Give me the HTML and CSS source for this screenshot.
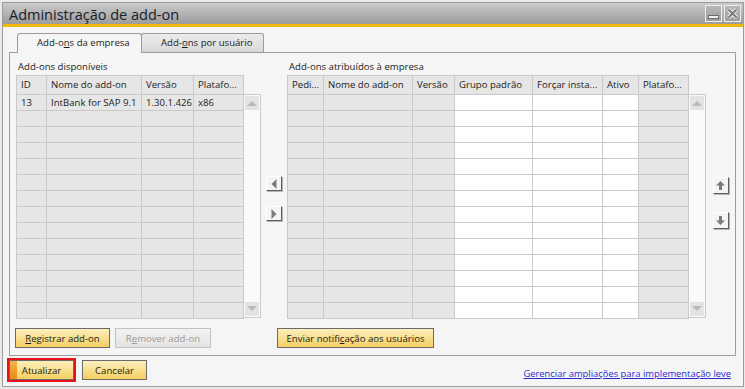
FILE: index.html
```html
<!DOCTYPE html>
<html lang="pt-BR">
<head>
    <meta charset="UTF-8">
    <title>Administração de add-on</title>
    <link rel="stylesheet" href="styles.css">
</head>
<body>
<div class="window">
    <div class="frame">
        <div class="titlebar">
            <span class="title">Administração de add-on</span>
            <div class="title-buttons">
                <span class="tbtn">
                    <svg width="15" height="15" viewBox="0 0 15 15"><rect x="2.5" y="9.5" width="10" height="3" fill="#f2f2f2" stroke="#6e6e6e"/></svg>
                </span>
                <span class="tbtn">
                    <svg width="15" height="15" viewBox="0 0 15 15"><path d="M3.5 3.5 L11.5 11.5 M11.5 3.5 L3.5 11.5" stroke="#f0f0f0" stroke-width="4"/><path d="M3.5 3.5 L11.5 11.5 M11.5 3.5 L3.5 11.5" stroke="#7c7c7c" stroke-width="2"/></svg>
                </span>
            </div>
        </div>

        <div class="content">
            <div class="tabs">
                <div class="tab active">Add-o<u>n</u>s da empresa</div>
                <div class="tab">Add-<u>o</u>ns por usuário</div>
            </div>

            <div class="panel">
                <div class="lists">
                    <div class="section available">
                        <div class="label">Add-ons disponíveis</div>
                        <div class="grid-wrap">
                            <table class="grid">
                                <colgroup>
                                    <col class="c30"><col class="c95"><col class="c52"><col class="c50">
                                </colgroup>
                                <tr class="head"><th>ID</th><th>Nome do add-on</th><th>Versão</th><th>Platafo...</th></tr>
                                <tr><td>13</td><td>IntBank for SAP 9.1</td><td>1.30.1.426</td><td>x86</td></tr>
                                <tr><td></td><td></td><td></td><td></td></tr>
                                <tr><td></td><td></td><td></td><td></td></tr>
                                <tr><td></td><td></td><td></td><td></td></tr>
                                <tr><td></td><td></td><td></td><td></td></tr>
                                <tr><td></td><td></td><td></td><td></td></tr>
                                <tr><td></td><td></td><td></td><td></td></tr>
                                <tr><td></td><td></td><td></td><td></td></tr>
                                <tr><td></td><td></td><td></td><td></td></tr>
                                <tr><td></td><td></td><td></td><td></td></tr>
                                <tr><td></td><td></td><td></td><td></td></tr>
                                <tr><td></td><td></td><td></td><td></td></tr>
                                <tr><td></td><td></td><td></td><td></td></tr>
                                <tr><td></td><td></td><td></td><td></td></tr>
                            </table>
                            <div class="scrollbar">
                                <span class="sb-btn"><svg width="10" height="6" viewBox="0 0 10 6"><path d="M0 6 L5 1 L10 6 Z" fill="#b9b9b9"/></svg></span>
                                <span class="sb-btn"><svg width="10" height="6" viewBox="0 0 10 6"><path d="M0 0 L5 5 L10 0 Z" fill="#b9b9b9"/></svg></span>
                            </div>
                        </div>
                    </div>

                    <div class="movers">
                        <span class="mini"><svg width="6" height="10" viewBox="0 0 6 10"><path d="M5.5 0 L0.5 5 L5.5 10 Z" fill="#7b7b7b"/></svg></span>
                        <span class="mini"><svg width="6" height="10" viewBox="0 0 6 10"><path d="M0.5 0 L5.5 5 L0.5 10 Z" fill="#7b7b7b"/></svg></span>
                    </div>

                    <div class="section assigned">
                        <div class="label">Add-ons atribuídos à empresa</div>
                        <div class="grid-wrap">
                            <table class="grid wide">
                                <colgroup>
                                    <col class="c36"><col class="c89"><col class="c42"><col class="c78"><col class="c70"><col class="c36"><col class="c50">
                                </colgroup>
                                <tr class="head"><th>Pedi...</th><th>Nome do add-on</th><th>Versão</th><th>Grupo padrão</th><th>Forçar insta...</th><th>Ativo</th><th>Platafo...</th></tr>
                                <tr><td></td><td></td><td></td><td></td><td></td><td></td><td></td></tr>
                                <tr><td></td><td></td><td></td><td></td><td></td><td></td><td></td></tr>
                                <tr><td></td><td></td><td></td><td></td><td></td><td></td><td></td></tr>
                                <tr><td></td><td></td><td></td><td></td><td></td><td></td><td></td></tr>
                                <tr><td></td><td></td><td></td><td></td><td></td><td></td><td></td></tr>
                                <tr><td></td><td></td><td></td><td></td><td></td><td></td><td></td></tr>
                                <tr><td></td><td></td><td></td><td></td><td></td><td></td><td></td></tr>
                                <tr><td></td><td></td><td></td><td></td><td></td><td></td><td></td></tr>
                                <tr><td></td><td></td><td></td><td></td><td></td><td></td><td></td></tr>
                                <tr><td></td><td></td><td></td><td></td><td></td><td></td><td></td></tr>
                                <tr><td></td><td></td><td></td><td></td><td></td><td></td><td></td></tr>
                                <tr><td></td><td></td><td></td><td></td><td></td><td></td><td></td></tr>
                                <tr><td></td><td></td><td></td><td></td><td></td><td></td><td></td></tr>
                                <tr><td></td><td></td><td></td><td></td><td></td><td></td><td></td></tr>
                            </table>
                            <div class="scrollbar">
                                <span class="sb-btn"><svg width="10" height="6" viewBox="0 0 10 6"><path d="M0 6 L5 1 L10 6 Z" fill="#b9b9b9"/></svg></span>
                                <span class="sb-btn"><svg width="10" height="6" viewBox="0 0 10 6"><path d="M0 0 L5 5 L10 0 Z" fill="#b9b9b9"/></svg></span>
                            </div>
                        </div>
                    </div>

                    <div class="movers order">
                        <span class="mini tall"><svg width="9" height="9" viewBox="0 0 9 9"><path d="M4.5 0 L9 4.5 L6 4.5 L6 9 L3 9 L3 4.5 L0 4.5 Z" fill="#7b7b7b"/></svg></span>
                        <span class="mini tall"><svg width="9" height="9" viewBox="0 0 9 9"><path d="M4.5 9 L9 4.5 L6 4.5 L6 0 L3 0 L3 4.5 L0 4.5 Z" fill="#7b7b7b"/></svg></span>
                    </div>
                </div>

                <div class="actions">
                    <button class="btn register"><u>R</u>egistrar add-on</button>
                    <button class="btn remove" disabled>R<u>e</u>mover add-on</button>
                    <button class="btn notify">Enviar notifi<u>c</u>ação aos usuários</button>
                </div>
            </div>
        </div>

        <div class="footer">
            <button class="btn update">Atualizar</button>
            <button class="btn cancel">Cancelar</button>
            <a class="manage" href="#">Gerenciar ampliações para implementação leve</a>
        </div>
    </div>
</div>
</body>
</html>
```

FILE: styles.css
```css
* {
    box-sizing: border-box;
}

body {
    margin: 0;
    font-family: "Open Sans", "Noto Sans", sans-serif;
    font-size: 9.6px;
    color: #1c1c1c;
    background: #e9e9e9;
}

.window {
    width: 745px;
    height: 389px;
    padding: 2px 1px 2px 2px;
    background: #e9e9e9;
}

.frame {
    height: 100%;
    border: 1px solid #9c9c9c;
    background: #f5f5f5;
    display: flex;
    flex-direction: column;
}

/* title bar */
.titlebar {
    height: 24px;
    display: flex;
    align-items: center;
    justify-content: space-between;
    background: linear-gradient(to bottom, #cbcbcb, #9c9c9c);
    border-bottom: 3px solid #f5b60a;
    padding: 0 2px 0 6px;
}

.title {
    font-size: 14.5px;
    color: #161d2b;
    padding-top: 1px;
}

.title-buttons {
    display: flex;
    gap: 2px;
}

.tbtn {
    width: 17px;
    height: 17px;
    border: 1px solid #ededed;
    background: linear-gradient(to bottom, #b8b8b8, #9d9d9d);
    display: flex;
    align-items: center;
    justify-content: center;
}

/* tabs */
.content {
    padding: 6px 7px 0 6px;
}

.tabs {
    display: flex;
    padding-left: 8px;
    height: 19px;
}

.tab {
    height: 19px;
    padding: 2px 0 0 19px;
    border: 1px solid #9c9c9c;
    border-bottom: none;
    border-radius: 3px 3px 0 0;
    background: linear-gradient(to bottom, #ececec, #d9d9d9);
    font-size: 9.6px;
}

.tab.active {
    width: 125px;
    height: 20px;
    margin-bottom: -1px;
    background: #f5f5f5;
    position: relative;
    z-index: 1;
}

.tab + .tab {
    width: 123px;
    margin-left: -1px;
}

.panel {
    height: 304px;
    border: 1px solid #9c9c9c;
    padding: 7px 0 0 5px;
}

.lists {
    display: flex;
    margin-left: 1px;
}

.label {
    height: 15px;
    line-height: 13px;
    padding-left: 2px;
}

.section.available {
    width: 245px;
}

.section.assigned {
    width: 420px;
}

.grid-wrap {
    display: flex;
    align-items: flex-start;
}

.grid {
    border-collapse: collapse;
    table-layout: fixed;
    background: #e6e6e6;
    width: 228px;
}

.grid.wide {
    width: 402px;
}

.c30 { width: 30px; }
.c95 { width: 95px; }
.c52 { width: 52px; }
.c50 { width: 50px; }
.c36 { width: 36px; }
.c89 { width: 89px; }
.c42 { width: 42px; }
.c78 { width: 78px; }
.c70 { width: 70px; }

.grid th,
.grid td {
    border: 1px solid #c9c9c9;
    height: 16px;
    padding: 0 0 0 4px;
    font-weight: normal;
    text-align: left;
    white-space: nowrap;
    overflow: hidden;
    line-height: 14px;
}

.grid tr.head th {
    height: 19px;
}

.grid.wide td:nth-child(4),
.grid.wide td:nth-child(5),
.grid.wide td:nth-child(6) {
    background: #ffffff;
}

.scrollbar {
    width: 18px;
    height: 224px;
    margin: 19px 0 0 -1px;
    border: 1px solid #c9c9c9;
    background: #fafafa;
    padding: 1px;
    display: flex;
    flex-direction: column;
    justify-content: space-between;
}

.sb-btn {
    height: 14px;
    background: #e3e3e3;
    display: flex;
    align-items: center;
    justify-content: center;
}

/* move buttons between the grids */
.movers {
    width: 26px;
    display: flex;
    flex-direction: column;
    align-items: center;
    gap: 15px;
    padding-top: 116px;
}

.movers.order {
    width: 27px;
    gap: 18px;
    padding-top: 117px;
}

.mini {
    width: 16px;
    height: 15px;
    background: #f4f4f4;
    border: 1px solid #ffffff;
    border-right-color: #5e5e5e;
    border-bottom-color: #5e5e5e;
    box-shadow: 1px 1px 0 #b5b5b5;
    display: flex;
    align-items: center;
    justify-content: center;
}

.mini.tall {
    height: 17px;
}

/* buttons */
.actions {
    display: flex;
    gap: 5px;
    margin-top: 9px;
}

.btn {
    height: 20px;
    padding: 0;
    font-family: inherit;
    font-size: 9.6px;
    color: #1c1c1c;
    border: 1px solid #6a6a6a;
    background: linear-gradient(to bottom, #fcefbd, #f3cf62);
}

.btn.register { width: 95px; }

.btn.remove {
    width: 96px;
    color: #9b9b9b;
    border-color: #c2c2c2;
    background: linear-gradient(to bottom, #f2f2f2, #e4e4e4);
}

.btn.notify {
    width: 157px;
    margin-left: 61px;
}

.footer {
    flex: 1;
    display: flex;
    align-items: flex-start;
    padding: 4px 12px 0 6px;
    gap: 8px;
}

.btn.update {
    width: 65px;
    outline: 2px solid #e8101a;
    background:
        linear-gradient(to bottom, #f4b44a, #e98c12) left / 7px 100% no-repeat,
        linear-gradient(to bottom, #fcefbd, #f3cf62);
}

.btn.cancel { width: 65px; }

.manage {
    margin-left: auto;
    align-self: center;
    margin-top: 1px;
    color: #2a2ad2;
    font-size: 9.4px;
}
```
